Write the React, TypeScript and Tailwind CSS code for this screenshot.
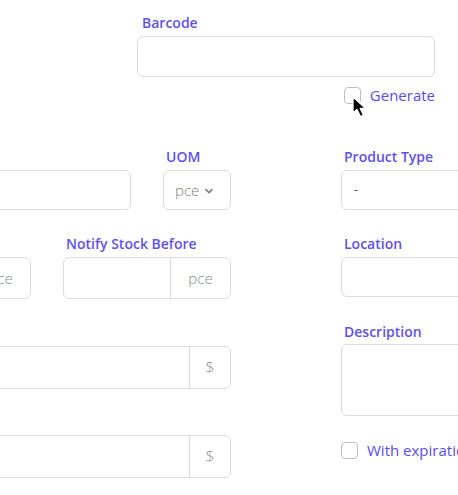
import React from 'react'

const labelCls = 'block pl-[3px] text-[14px] font-semibold leading-[18px] text-[#5f52e6]'
const boxCls = 'rounded-[6px] border border-[#dcdcdc] bg-white'

function Checkbox() {
  return <span className="block h-[17px] w-[17px] shrink-0 rounded-[4px] border border-[#b9bec7] bg-white" />
}

function AddonGroup({ addon, addonW, h }: { addon: string; addonW: string; h: string }) {
  return (
    <div className={`flex ${h} ${boxCls}`}>
      <div className="flex-1" />
      <div
        className={`flex ${addonW} items-center justify-center border-l border-[#dcdcdc] text-[15px] font-light text-[#8a8a8a]`}
      >
        {addon}
      </div>
    </div>
  )
}

export default function App() {
  return (
    <div className="relative h-[495px] w-[458px] overflow-hidden bg-white font-['Open_Sans',sans-serif]">
      {/* Barcode */}
      <div className="ml-[137px] w-[298px] pt-[14px]">
        <label className={`${labelCls} pl-[5px]`}>Barcode</label>
        <div className={`mt-[4px] h-[41px] ${boxCls}`} />
        <div className="mt-[10px] flex items-center justify-end gap-[9px]">
          <Checkbox />
          <span className="text-[15px] font-medium leading-[17px] text-[#5a4de8]">Generate</span>
        </div>
      </div>

      <div className="mt-[44px] flex">
        {/* left column, partly off-screen */}
        <div className="-ml-[100px] flex w-[331px] shrink-0 flex-col">
          <div className="flex gap-[32px]">
            <div className="flex-1">
              <div className="h-[18px]" />
              <div className={`mt-[4px] h-[40px] ${boxCls}`} />
            </div>
            <div className="w-[68px]">
              <label className={labelCls}>UOM</label>
              <div className={`mt-[4px] flex h-[40px] items-center pl-[11px] ${boxCls}`}>
                <span className="text-[15px] font-light text-[#808080]">pce</span>
                <svg className="ml-[5px] mt-[2px]" width="10" height="10" viewBox="0 0 24 24" fill="none" stroke="#8a8a8a" strokeWidth="4.5" strokeLinecap="round" strokeLinejoin="round">
                  <polyline points="5 9 12 16 19 9" />
                </svg>
              </div>
            </div>
          </div>

          <div className="mt-[25px] flex gap-[32px]">
            <div className="flex-1">
              <div className="h-[18px]" />
              <div className="mt-[4px]">
                <AddonGroup addon="pce" addonW="w-[60px]" h="h-[42px]" />
              </div>
            </div>
            <div className="w-[168px]">
              <label className={labelCls}>Notify Stock Before</label>
              <div className="mt-[4px]">
                <AddonGroup addon="pce" addonW="w-[60px]" h="h-[42px]" />
              </div>
            </div>
          </div>

          <div className="mt-[25px]">
            <div className="h-[18px]" />
            <div className="mt-[4px]">
              <AddonGroup addon="$" addonW="w-[41px]" h="h-[43px]" />
            </div>
          </div>

          <div className="mt-[24px]">
            <div className="h-[18px]" />
            <div className="mt-[4px]">
              <AddonGroup addon="$" addonW="w-[41px]" h="h-[43px]" />
            </div>
          </div>
        </div>

        {/* right column */}
        <div className="ml-[110px] flex w-[200px] shrink-0 flex-col">
          <label className={labelCls}>Product Type</label>
          <div className={`mt-[4px] flex h-[40px] items-center pl-[12px] ${boxCls}`}>
            <span className="text-[13px] text-[#555]">-</span>
          </div>

          <label className={`${labelCls} mt-[25px]`}>Location</label>
          <div className={`mt-[4px] h-[40px] ${boxCls}`} />

          <label className={`${labelCls} mt-[26px]`}>Description</label>
          <div className={`mt-[3px] h-[72px] ${boxCls}`} />

          <div className="mt-[26px] flex items-center gap-[9px]">
            <Checkbox />
            <span className="whitespace-nowrap text-[15px] font-medium leading-[17px] text-[#5a4de8]">
              With expiration
            </span>
          </div>
        </div>
      </div>

      {/* mouse pointer */}
      <svg className="absolute left-[352px] top-[96px]" width="17" height="22" viewBox="0 0 17 22">
        <path d="M1 1 L1 17 L5 13.5 L8.5 20.5 L11.5 19.2 L8.2 12.5 L13.8 12.5 Z" fill="#000" stroke="#fff" strokeWidth="1.3" strokeLinejoin="round" />
      </svg>
    </div>
  )
}
